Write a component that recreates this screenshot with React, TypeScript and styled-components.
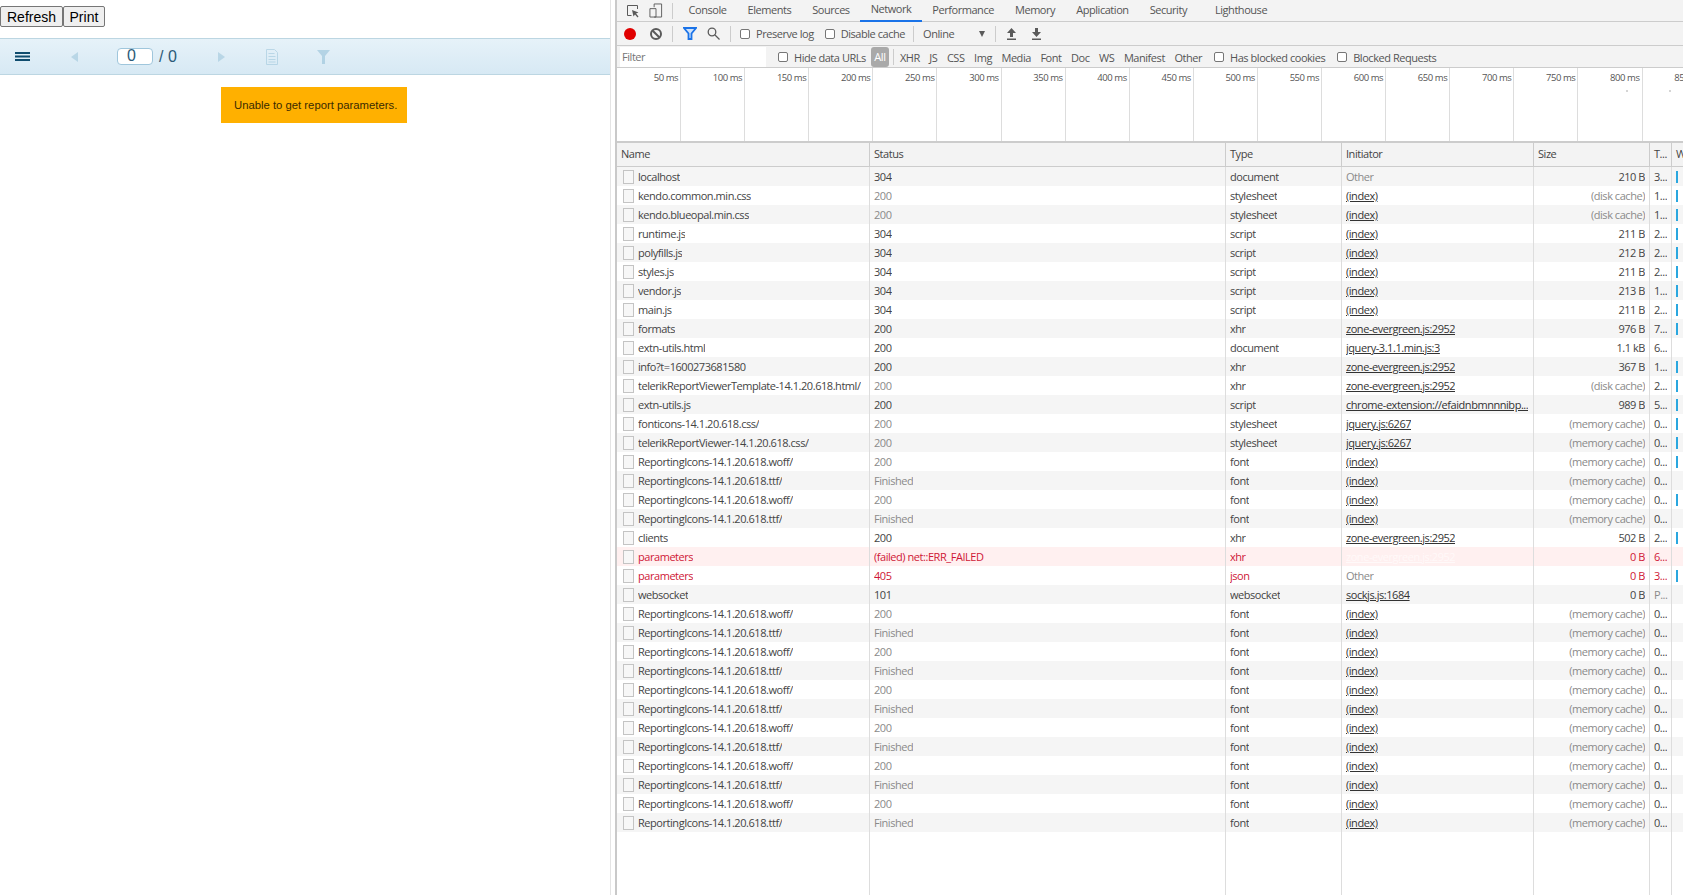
import { ReactElement } from "react";
import styled, { createGlobalStyle } from "styled-components";

const uiFont = `"Open Sans", "Liberation Sans", sans-serif`;

type Tone = "normal" | "muted" | "error";

interface Row {
  name: string;
  status: string;
  statusTone?: Tone;
  type: string;
  initiator: string;
  link?: boolean;
  size: string;
  sizeMuted?: boolean;
  time: string;
  bar?: boolean;
  tone?: "failed" | "error";
}

const ZONE = "zone-evergreen.js:2952";
const WOFF = "ReportingIcons-14.1.20.618.woff/";
const TTF = "ReportingIcons-14.1.20.618.ttf/";
const MEM = "(memory cache)";

const fontRow = (name: string, bar: boolean): Row => ({
  name,
  status: name === WOFF ? "200" : "Finished",
  statusTone: "muted",
  type: "font",
  initiator: "(index)",
  link: true,
  size: MEM,
  sizeMuted: true,
  time: "0...",
  bar,
});

const rows: Row[] = [
  { name: "localhost", status: "304", type: "document", initiator: "Other", size: "210 B", time: "3...", bar: true },
  { name: "kendo.common.min.css", status: "200", statusTone: "muted", type: "stylesheet", initiator: "(index)", link: true, size: "(disk cache)", sizeMuted: true, time: "1...", bar: true },
  { name: "kendo.blueopal.min.css", status: "200", statusTone: "muted", type: "stylesheet", initiator: "(index)", link: true, size: "(disk cache)", sizeMuted: true, time: "1...", bar: true },
  { name: "runtime.js", status: "304", type: "script", initiator: "(index)", link: true, size: "211 B", time: "2...", bar: true },
  { name: "polyfills.js", status: "304", type: "script", initiator: "(index)", link: true, size: "212 B", time: "2...", bar: true },
  { name: "styles.js", status: "304", type: "script", initiator: "(index)", link: true, size: "211 B", time: "2...", bar: true },
  { name: "vendor.js", status: "304", type: "script", initiator: "(index)", link: true, size: "213 B", time: "1...", bar: true },
  { name: "main.js", status: "304", type: "script", initiator: "(index)", link: true, size: "211 B", time: "2...", bar: true },
  { name: "formats", status: "200", type: "xhr", initiator: ZONE, link: true, size: "976 B", time: "7...", bar: true },
  { name: "extn-utils.html", status: "200", type: "document", initiator: "jquery-3.1.1.min.js:3", link: true, size: "1.1 kB", time: "6..." },
  { name: "info?t=1600273681580", status: "200", type: "xhr", initiator: ZONE, link: true, size: "367 B", time: "1...", bar: true },
  { name: "telerikReportViewerTemplate-14.1.20.618.html/", status: "200", statusTone: "muted", type: "xhr", initiator: ZONE, link: true, size: "(disk cache)", sizeMuted: true, time: "2...", bar: true },
  { name: "extn-utils.js", status: "200", type: "script", initiator: "chrome-extension://efaidnbmnnnibp...", link: true, size: "989 B", time: "5...", bar: true },
  { name: "fonticons-14.1.20.618.css/", status: "200", statusTone: "muted", type: "stylesheet", initiator: "jquery.js:6267", link: true, size: MEM, sizeMuted: true, time: "0...", bar: true },
  { name: "telerikReportViewer-14.1.20.618.css/", status: "200", statusTone: "muted", type: "stylesheet", initiator: "jquery.js:6267", link: true, size: MEM, sizeMuted: true, time: "0...", bar: true },
  fontRow(WOFF, true),
  fontRow(TTF, false),
  fontRow(WOFF, true),
  fontRow(TTF, false),
  { name: "clients", status: "200", type: "xhr", initiator: ZONE, link: true, size: "502 B", time: "2...", bar: true },
  { name: "parameters", status: "(failed) net::ERR_FAILED", type: "xhr", initiator: ZONE, link: true, size: "0 B", time: "6...", tone: "failed" },
  { name: "parameters", status: "405", type: "json", initiator: "Other", size: "0 B", time: "3...", bar: true, tone: "error" },
  { name: "websocket", status: "101", type: "websocket", initiator: "sockjs.js:1684", link: true, size: "0 B", time: "P..." },
  ...Array.from({ length: 12 }, (_, i) => fontRow(i % 2 === 0 ? WOFF : TTF, false)),
];

const tabs = [
  { label: "Console" },
  { label: "Elements" },
  { label: "Sources" },
  { label: "Network", active: true },
  { label: "Performance" },
  { label: "Memory" },
  { label: "Application" },
  { label: "Security" },
  { label: "Lighthouse", extra: true },
];

const typeFilters = ["XHR", "JS", "CSS", "Img", "Media", "Font", "Doc", "WS", "Manifest", "Other"];

const ticks = Array.from({ length: 17 }, (_, i) => `${(i + 1) * 50} ms`);

export default function App(): ReactElement {
  return (
    <Page>
      <GlobalStyle />
      <ReportPane>
        <ButtonRow>
          <PageButton>Refresh</PageButton>
          <PageButton>Print</PageButton>
        </ButtonRow>
        <ViewerBar>
          <ViewerTool $width={30} $left={-1}>
            <svg width="15" height="11" viewBox="0 0 15 11">
              <path d="M0 1h15v2H0zM0 4.5h15v2H0zM0 8h15v2H0z" fill="#0f4c6e" />
            </svg>
          </ViewerTool>
          <ViewerTool $width={16} $left={30} $faded>
            <svg width="8" height="10" viewBox="0 0 8 10">
              <path d="M7 0v10L0 5z" fill="#8dbcd4" />
            </svg>
          </ViewerTool>
          <PageInput>0</PageInput>
          <PageCount>/ 0</PageCount>
          <ViewerTool $width={16} $left={35} $faded>
            <svg width="8" height="10" viewBox="0 0 8 10">
              <path d="M1 0v10l7-5z" fill="#8dbcd4" />
            </svg>
          </ViewerTool>
          <ViewerTool $width={16} $left={35} $faded>
            <svg width="14" height="16" viewBox="0 0 14 16" fill="none" stroke="#8dbcd4">
              <path d="M1.5.5h8l3 3v12h-11zM3.5 4.5h6M3.5 7.5h7M3.5 10.5h7M3.5 13h7" />
            </svg>
          </ViewerTool>
          <ViewerTool $width={16} $left={35} $faded>
            <svg width="13" height="14" viewBox="0 0 13 14">
              <path d="M0 0h13L8 6v8H5V6z" fill="#7fb4d0" />
            </svg>
          </ViewerTool>
        </ViewerBar>
        <Notice>Unable to get report parameters.</Notice>
      </ReportPane>
      <DevTools>
        <TabBar>
          <TabIcon>
            <svg width="14" height="14" viewBox="0 0 14 14" fill="none" stroke="#5a5a5a">
              <path d="M5.5 11.5h-4v-10h10v3.5" />
              <path d="M6 6l6.5 2.5-2.5 1 2.5 3-1 1-2.5-3-1.5 2z" fill="#5a5a5a" stroke="none" />
            </svg>
          </TabIcon>
          <TabIcon>
            <svg width="15" height="15" viewBox="0 0 15 15" fill="none" stroke="#5a5a5a">
              <path d="M5.5 4V.5h8v14h-8M1 5.5h6.5v9H1z" />
            </svg>
          </TabIcon>
          <BarDivider $left={0} $right={5} />
          {tabs.map((tab) => (
            <Tab key={tab.label} $active={tab.active} $extra={tab.extra}>
              {tab.label}
            </Tab>
          ))}
        </TabBar>
        <ToolBar>
          <RecordDot />
          <ClearIcon />
          <BarDivider $left={10} $right={10} />
          <svg width="14" height="13" viewBox="0 0 14 13">
            <path d="M1 1h12L8.5 6.5V12h-3V6.5z" fill="#cfe2fa" stroke="#1a73e8" strokeWidth="1.8" />
          </svg>
          <SearchIcon width="13" height="13" viewBox="0 0 13 13" fill="none" stroke="#5a5a5a" strokeWidth="1.3">
            <circle cx="5" cy="5" r="3.8" />
            <path d="M8 8l4.5 4.5" />
          </SearchIcon>
          <BarDivider $left={10} $right={9} />
          <CheckField $gap={6}>
            <Check />
            Preserve log
          </CheckField>
          <CheckField $gap={6} $left={11}>
            <Check />
            Disable cache
          </CheckField>
          <BarDivider $left={8} $right={9} />
          <ThrottleLabel>Online</ThrottleLabel>
          <DropCaret />
          <BarDivider $left={10} $right={10} />
          <TransferIcon width="11" height="12" viewBox="0 0 11 12">
            <path d="M5.5 0L10 5H7v4H4V5H1zM1 10.5h9V12H1z" fill="#5a5a5a" />
          </TransferIcon>
          <TransferIcon $left={14} width="11" height="12" viewBox="0 0 11 12">
            <path d="M5.5 9L10 4H7V0H4v4H1zM1 10.5h9V12H1z" fill="#5a5a5a" />
          </TransferIcon>
        </ToolBar>
        <FilterBar>
          <FilterInput>Filter</FilterInput>
          <CheckField $gap={6} $left={12}>
            <Check />
            Hide data URLs
          </CheckField>
          <AllPill>All</AllPill>
          <BarDivider $left={4} $right={6} />
          <TypeList>
            {typeFilters.map((type) => (
              <span key={type}>{type}</span>
            ))}
          </TypeList>
          <CheckField $gap={6} $left={12}>
            <Check />
            Has blocked cookies
          </CheckField>
          <CheckField $gap={6} $left={12}>
            <Check />
            Blocked Requests
          </CheckField>
        </FilterBar>
        <Timeline>
          {ticks.map((tick, i) => (
            <Tick key={tick}>
              {tick}
              {(i === 15 || i === 16) && <TickDot $left={i === 15 ? 48 : 26} />}
            </Tick>
          ))}
        </Timeline>
        <TableHead>
          <HeadCell>Name</HeadCell>
          <HeadCell>Status</HeadCell>
          <HeadCell>Type</HeadCell>
          <HeadCell>Initiator</HeadCell>
          <HeadCell>Size</HeadCell>
          <HeadCell>T...</HeadCell>
          <HeadCell>W</HeadCell>
        </TableHead>
        {rows.map((row, i) => (
          <TableRow key={i} $odd={i % 2 === 0} $failed={row.tone === "failed"}>
            <Cell $tone={row.tone ? "error" : "normal"}>
              <FileIcon />
              <CellText>{row.name}</CellText>
            </Cell>
            <Cell $tone={row.tone ? "error" : row.statusTone}>
              <CellText>{row.status}</CellText>
            </Cell>
            <Cell $tone={row.tone ? "error" : "normal"}>
              <CellText>{row.type}</CellText>
            </Cell>
            <Cell $tone={row.link ? "normal" : "muted"}>
              <CellText $link={row.link} $washed={row.tone === "failed"}>
                {row.initiator}
              </CellText>
            </Cell>
            <Cell $tone={row.tone ? "error" : row.sizeMuted ? "muted" : "normal"} $right>
              <CellText>{row.size}</CellText>
            </Cell>
            <Cell $tone={row.tone ? "error" : row.time === "P..." ? "muted" : "normal"} $narrow>
              <CellText>{row.time}</CellText>
            </Cell>
            <Cell $narrow>{row.bar && <WaterfallBar />}</Cell>
          </TableRow>
        ))}
        <TableFiller>
          <FillerCell />
          <FillerCell />
          <FillerCell />
          <FillerCell />
          <FillerCell />
          <FillerCell />
          <FillerCell />
        </TableFiller>
      </DevTools>
    </Page>
  );
}

const GlobalStyle = createGlobalStyle`
  html, body {
    margin: 0;
    padding: 0;
    background: #fff;
  }
`;

const Page = styled.div`
  display: flex;
  width: 1683px;
  height: 895px;
  overflow: hidden;
`;

const ReportPane = styled.div`
  width: 611px;
  margin-right: 4px;
  flex: none;
  box-sizing: border-box;
  border-right: 1px solid #e4e4e4;
  font-family: "Liberation Sans", Arial, sans-serif;
`;

const ButtonRow = styled.div`
  display: flex;
  padding-top: 6px;
`;

const PageButton = styled.button`
  height: 21px;
  padding: 0 5.5px 0 6px;
  margin: 0;
  background: #efefef;
  border: 1px solid #767676;
  border-radius: 2px;
  color: #000;
  font: 14px "Liberation Sans", Arial, sans-serif;
`;

const ViewerBar = styled.div`
  display: flex;
  align-items: center;
  box-sizing: border-box;
  width: 610px;
  height: 37px;
  margin-top: 11px;
  padding-left: 8px;
  background: linear-gradient(#e6f2f9, #d7e9f4);
  border-top: 1px solid #bcd6e2;
  border-bottom: 1px solid #bcd6e2;
`;

const ViewerTool = styled.span<{ $width: number; $left: number; $faded?: boolean }>`
  display: flex;
  justify-content: center;
  width: ${(p) => p.$width}px;
  margin-left: ${(p) => p.$left}px;
  opacity: ${(p) => (p.$faded ? 0.45 : 1)};
`;

const PageInput = styled.div`
  box-sizing: border-box;
  width: 36px;
  height: 17px;
  margin-left: 34px;
  padding-left: 9px;
  background: #fff;
  border: 1px solid #9fc6dc;
  border-radius: 4px;
  color: #2c5a78;
  font-size: 16px;
  line-height: 14px;
`;

const PageCount = styled.span`
  margin-left: 6px;
  color: #2c5a78;
  font-size: 16px;
  width: 19px;
`;

const Notice = styled.div`
  width: 186px;
  height: 36px;
  margin: 12px 0 0 221px;
  padding-left: 13px;
  box-sizing: border-box;
  background: #ffb000;
  color: #3a2a00;
  font-size: 11.3px;
  line-height: 36px;
  white-space: nowrap;
`;

const DevTools = styled.div`
  display: flex;
  flex-direction: column;
  flex: none;
  width: 1068px;
  height: 895px;
  box-sizing: border-box;
  border-left: 2px solid #c9c9c9;
  font-family: ${uiFont};
  font-size: 11px;
  letter-spacing: -0.45px;
  color: #444;
  background: #fff;
`;

const TabBar = styled.div`
  display: flex;
  align-items: center;
  flex: none;
  height: 22px;
  box-sizing: border-box;
  padding-left: 9px;
  background: #f3f3f3;
  border-bottom: 1px solid #ccc;
`;

const TabIcon = styled.span`
  display: flex;
  width: 14px;
  margin-right: 9px;
`;

const Tab = styled.span<{ $active?: boolean; $extra?: boolean }>`
  display: flex;
  align-items: center;
  height: 22px;
  padding: 0 10.5px 2px;
  margin-left: ${(p) => (p.$extra ? 7 : 0)}px;
  color: #555;
  border-bottom: ${(p) => (p.$active ? "2px solid #1a73e8" : "none")};
  box-sizing: border-box;
`;

const BarDivider = styled.span<{ $left: number; $right: number }>`
  flex: none;
  width: 1px;
  height: 16px;
  margin: 0 ${(p) => p.$right}px 0 ${(p) => p.$left}px;
  background: #ccc;
`;

const ToolBar = styled.div`
  display: flex;
  align-items: center;
  flex: none;
  height: 24px;
  box-sizing: border-box;
  padding-left: 7px;
  background: #f3f3f3;
  border-bottom: 1px solid #ccc;
`;

const RecordDot = styled.span`
  width: 12px;
  height: 12px;
  border-radius: 50%;
  background: #e00000;
`;

const ClearIcon = styled.span`
  position: relative;
  box-sizing: border-box;
  width: 12px;
  height: 12px;
  margin-left: 14px;
  border: 2px solid #5a5a5a;
  border-radius: 50%;

  &::after {
    content: "";
    position: absolute;
    left: -1px;
    top: 3px;
    width: 10px;
    height: 2px;
    background: #5a5a5a;
    transform: rotate(45deg);
  }
`;

const SearchIcon = styled.svg`
  margin-left: 10px;
`;

const CheckField = styled.span<{ $gap: number; $left?: number }>`
  display: inline-flex;
  align-items: center;
  flex: none;
  gap: ${(p) => p.$gap}px;
  margin-left: ${(p) => p.$left ?? 0}px;
  color: #555;
`;

const Check = styled.span`
  box-sizing: border-box;
  width: 10px;
  height: 10px;
  background: #fff;
  border: 1px solid #767676;
  border-radius: 2px;
`;

const ThrottleLabel = styled.span`
  width: 56px;
  color: #555;
`;

const DropCaret = styled.span`
  width: 0;
  height: 0;
  border-left: 3.5px solid transparent;
  border-right: 3.5px solid transparent;
  border-top: 6px solid #5a5a5a;
`;

const TransferIcon = styled.svg<{ $left?: number }>`
  margin-left: ${(p) => p.$left ?? 0}px;
`;

const FilterBar = styled.div`
  display: flex;
  align-items: center;
  flex: none;
  height: 22px;
  box-sizing: border-box;
  padding: 1px 0 0 3px;
  background: #f3f3f3;
  border-bottom: 1px solid #ccc;
`;

const FilterInput = styled.div`
  width: 144px;
  height: 20px;
  padding-left: 2px;
  background: #fff;
  color: #757575;
  line-height: 20px;
`;

const AllPill = styled.span`
  width: 18px;
  height: 20px;
  margin-left: 5px;
  background: #a9a9a9;
  border-radius: 3px;
  color: #fff;
  text-align: center;
  line-height: 20px;
`;

const TypeList = styled.div`
  display: flex;
  gap: 9.5px;
  color: #555;
`;

const Timeline = styled.div`
  display: flex;
  flex: none;
  height: 75px;
  box-sizing: border-box;
  overflow: hidden;
  border-bottom: 2px solid #ccc;
`;

const Tick = styled.div`
  position: relative;
  flex: none;
  box-sizing: border-box;
  width: 64.1px;
  padding: 3px 2px 0 0;
  border-right: 1px solid #ddd;
  color: #555;
  font-size: 9.5px;
  text-align: right;
  white-space: nowrap;
`;

const TickDot = styled.span<{ $left: number }>`
  position: absolute;
  top: 22px;
  left: ${(p) => p.$left}px;
  width: 2px;
  height: 2px;
  background: #d5d5d5;
`;

const columns = "252px 356px 116px 192px 116px 22px 12px";

const TableHead = styled.div`
  display: grid;
  grid-template-columns: ${columns};
  flex: none;
  height: 24px;
  box-sizing: border-box;
  background: #f3f3f3;
  border-bottom: 1px solid #ccc;
`;

const HeadCell = styled.div`
  padding-left: 4px;
  overflow: hidden;
  white-space: nowrap;
  line-height: 22px;
  color: #444;

  & + & {
    border-left: 1px solid #ccc;
  }
`;

const TableRow = styled.div<{ $odd: boolean; $failed: boolean }>`
  display: grid;
  grid-template-columns: ${columns};
  flex: none;
  height: 19px;
  background: ${(p) => (p.$failed ? "#fff0f0" : p.$odd ? "#f5f5f5" : "#fff")};
`;

const toneColors: Record<Tone, string> = {
  normal: "#444",
  muted: "#8a8a8a",
  error: "#cf1736",
};

const Cell = styled.div<{ $tone?: Tone; $right?: boolean; $narrow?: boolean }>`
  display: flex;
  align-items: center;
  min-width: 0;
  box-sizing: border-box;
  padding: 0 ${(p) => (p.$narrow ? 0 : 4)}px 0 4px;
  justify-content: ${(p) => (p.$right ? "flex-end" : "flex-start")};
  color: ${(p) => toneColors[p.$tone ?? "normal"]};
  overflow: hidden;
  white-space: nowrap;

  & + & {
    border-left: 1px solid #ddd;
  }
`;

const CellText = styled.span<{ $link?: boolean; $washed?: boolean }>`
  overflow: hidden;
  text-overflow: clip;
  text-decoration: ${(p) => (p.$link ? "underline" : "none")};
  color: ${(p) => (p.$washed ? "#fff9f9" : p.$link ? "#333" : "inherit")};
`;

const FileIcon = styled.span`
  flex: none;
  box-sizing: border-box;
  width: 11px;
  height: 14px;
  margin: 0 4px 0 2px;
  background: #f7f7f7;
  border: 1px solid #c4c4c4;
`;

const WaterfallBar = styled.span`
  width: 2px;
  height: 12px;
  background: #2aa7df;
`;

const TableFiller = styled.div`
  display: grid;
  grid-template-columns: ${columns};
  flex: 1;
`;

const FillerCell = styled.div`
  & + & {
    border-left: 1px solid #ddd;
  }
`;
